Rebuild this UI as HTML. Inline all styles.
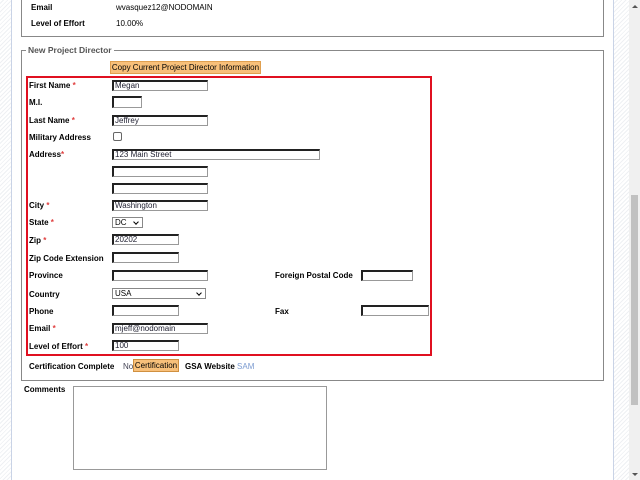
<!DOCTYPE html>
<html><head><meta charset="utf-8"><style>
*{margin:0;padding:0;box-sizing:border-box}
body{width:640px;height:480px;overflow:hidden;background:#fff;font-family:"Liberation Sans",sans-serif;font-size:8px;position:relative;color:#000}
.hatch{position:absolute;top:0;height:480px;background:repeating-linear-gradient(135deg,#fff 0 2px,#eef0f3 2px 3px)}
.a{position:absolute;white-space:nowrap}
.l{position:absolute;font-weight:bold;white-space:nowrap;font-size:8px}
.r{color:#e04040}
.in{position:absolute;height:11px;background:#fff;border:1px solid;border-color:#222 #999 #999 #222;border-width:2px 1px 1px 2px;font-size:8px;line-height:8px;padding-left:1px;color:#223}
.sel{position:absolute;height:11px;border:1px solid #888;background:#fff;font-size:8px;line-height:9px;padding-left:2px}
.sel:after{content:"";position:absolute;right:4px;top:2px;width:3px;height:3px;border-right:1.5px solid #000;border-bottom:1.5px solid #000;transform:rotate(45deg)}
</style></head><body>
<div class="hatch" style="left:0;width:11px"></div>
<div style="position:absolute;left:11px;top:0;width:1px;height:480px;background:#c9d3e6"></div>
<div class="hatch" style="left:614px;width:15px"></div>
<div style="position:absolute;left:613px;top:0;width:1px;height:480px;background:#c9d3e6"></div>
<div style="position:absolute;left:629px;top:0;width:11px;height:480px;background:#f0f0f0"></div>
<div style="position:absolute;left:631px;top:195px;width:7px;height:210px;background:#c1c1c1"></div>
<div style="position:absolute;left:632px;top:5px;width:0;height:0;border-left:3px solid transparent;border-right:3px solid transparent;border-bottom:3px solid #555"></div>
<div style="position:absolute;left:632px;top:473px;width:0;height:0;border-left:3px solid transparent;border-right:3px solid transparent;border-top:3px solid #555"></div>

<div style="position:absolute;left:21px;top:-2px;width:583px;height:39px;border:1px solid #888;border-top:none"></div>
<div class="l" style="left:31px;top:3px">Email</div><div class="a" style="left:116px;top:3px">wvasquez12@NODOMAIN</div>
<div class="l" style="left:31px;top:19px">Level of Effort</div><div class="a" style="left:116px;top:19px">10.00%</div>

<div style="position:absolute;left:21px;top:50px;width:583px;height:331px;border:1px solid #888"></div>
<div class="l" style="left:26px;top:45px;background:#fff;padding:0 2px;color:#555;font-size:8.5px">New Project Director</div>
<div class="a" style="left:110px;top:61px;height:13px;width:151px;background:#f8c07a;border:1px solid #e0a050;font-size:8px;line-height:11px;text-align:center">Copy Current Project Director Information</div>

<div style="position:absolute;left:26px;top:76px;width:406px;height:280px;border:2px solid #e01020"></div>

<div class="l" style="left:29px;top:81px">First Name <span class="r">*</span></div><div class="in" style="left:112px;top:80px;width:96px">Megan</div>
<div class="l" style="left:29px;top:98px">M.I.</div><div class="in" style="left:112px;top:96px;width:30px;height:12px"></div>
<div class="l" style="left:29px;top:116px">Last Name <span class="r">*</span></div><div class="in" style="left:112px;top:115px;width:96px">Jeffrey</div>
<div class="l" style="left:29px;top:133px">Military Address</div><div style="position:absolute;left:113px;top:132px;width:9px;height:9px;border:1px solid #666;border-radius:2px"></div>
<div class="l" style="left:29px;top:150px">Address<span class="r">*</span></div><div class="in" style="left:112px;top:149px;width:208px">123 Main Street</div>
<div class="in" style="left:112px;top:166px;width:96px"></div>
<div class="in" style="left:112px;top:183px;width:96px"></div>
<div class="l" style="left:29px;top:201px">City <span class="r">*</span></div><div class="in" style="left:112px;top:200px;width:96px">Washington</div>
<div class="l" style="left:29px;top:218px">State <span class="r">*</span></div><div class="sel" style="left:112px;top:217px;width:31px">DC</div>
<div class="l" style="left:29px;top:236px">Zip <span class="r">*</span></div><div class="in" style="left:112px;top:234px;width:67px">20202</div>
<div class="l" style="left:29px;top:254px">Zip Code Extension</div><div class="in" style="left:112px;top:252px;width:67px"></div>
<div class="l" style="left:29px;top:271px">Province</div><div class="in" style="left:112px;top:270px;width:96px"></div>
<div class="l" style="left:275px;top:271px">Foreign Postal Code</div><div class="in" style="left:361px;top:270px;width:52px"></div>
<div class="l" style="left:29px;top:290px">Country</div><div class="sel" style="left:112px;top:288px;width:94px">USA</div>
<div class="l" style="left:29px;top:307px">Phone</div><div class="in" style="left:112px;top:305px;width:67px"></div>
<div class="l" style="left:275px;top:307px">Fax</div><div class="in" style="left:361px;top:305px;width:68px"></div>
<div class="l" style="left:29px;top:324px">Email <span class="r">*</span></div><div class="in" style="left:112px;top:323px;width:96px">mjeff@nodomain</div>
<div class="l" style="left:29px;top:342px">Level of Effort <span class="r">*</span></div><div class="in" style="left:112px;top:340px;width:67px">100</div>

<div class="l" style="left:29px;top:362px">Certification Complete</div>
<div class="a" style="left:123px;top:362px;color:#445">No</div>
<div class="a" style="left:133px;top:359px;width:46px;height:13px;background:#f8c07a;border:1px solid #d09040;font-size:8px;line-height:11px;text-align:center">Certification</div>
<div class="l" style="left:185px;top:362px">GSA Website <span style="font-weight:normal;color:#7a9ad0">SAM</span></div>

<div class="l" style="left:24px;top:385px">Comments</div>
<div style="position:absolute;left:73px;top:386px;width:254px;height:84px;border:1px solid #999"></div>
</body></html>
